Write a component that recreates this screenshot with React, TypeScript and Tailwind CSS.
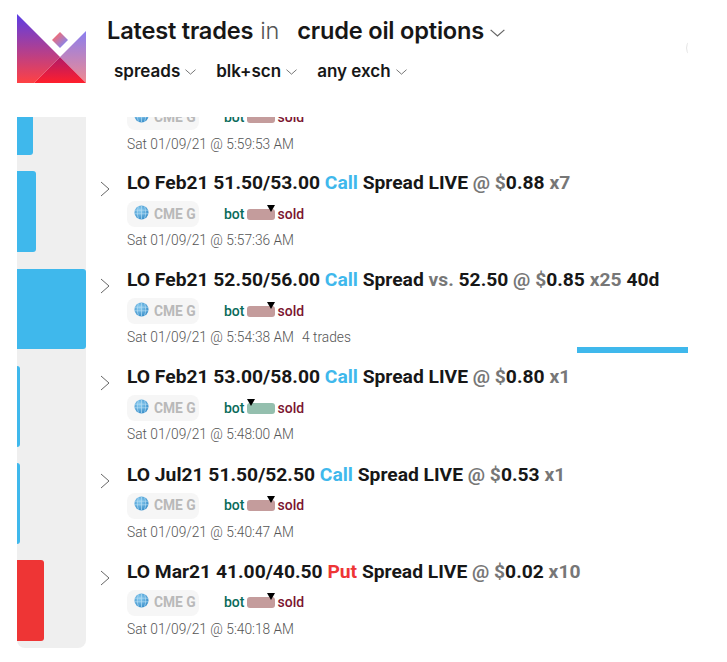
import React from "react";

const Chevron = ({ w = 12, h = 7, c = "#666" }: { w?: number; h?: number; c?: string }) => (
  <svg width={w} height={h} viewBox="0 0 12 7" fill="none" className="shrink-0" preserveAspectRatio="none">
    <path d="M0.5 0.8 L6 6 L11.5 0.8" stroke={c} strokeWidth="1" />
  </svg>
);

const Logo = () => (
  <svg width="69" height="69" viewBox="0 0 69 69" className="shrink-0">
    <defs>
      <linearGradient id="a" x1="0" y1="0" x2="0" y2="1">
        <stop offset="0" stopColor="#5a3de6" />
        <stop offset="1" stopColor="#ff4143" />
      </linearGradient>
      <linearGradient id="b" x1="0" y1="0" x2="0" y2="1">
        <stop offset="0" stopColor="#8a7ff0" />
        <stop offset="1" stopColor="#f08a90" />
      </linearGradient>
      <linearGradient id="c" x1="0" y1="0" x2="0" y2="1">
        <stop offset="0" stopColor="#b01a6a" />
        <stop offset="1" stopColor="#ff1f2c" />
      </linearGradient>
      <linearGradient id="d" x1="0" y1="0" x2="1" y2="1">
        <stop offset="0.15" stopColor="#fb6a6a" />
        <stop offset="0.85" stopColor="#7f86f5" />
      </linearGradient>
    </defs>
    <path d="M0 0 L43 43 L17 69 L0 69 Z" fill="url(#a)" />
    <path d="M69 17 V69 L43 43 Z" fill="url(#b)" />
    <path d="M43 43 L69 69 H17 Z" fill="url(#c)" />
    <path d="M43 18 L51 26 L43 34 L35 26 Z" fill="url(#d)" />
  </svg>
);

const Globe = () => (
  <svg width="15" height="15" viewBox="0 0 15 15" className="mb-[4px] shrink-0">
    <defs>
      <radialGradient id="g" cx="0.4" cy="0.35" r="0.75">
        <stop offset="0" stopColor="#8fd0f2" />
        <stop offset="1" stopColor="#2f86c4" />
      </radialGradient>
    </defs>
    <circle cx="7.5" cy="7.5" r="7" fill="url(#g)" />
    <path d="M1 5.2H14M0.6 8.8H14.4M7.5 .5V14.5M4.5 1.2C3 5 3 10 4.5 13.8M10.5 1.2C12 5 12 10 10.5 13.8" stroke="#b5dcf3" strokeWidth=".7" fill="none" />
  </svg>
);

const Chip = () => (
  <div className="flex h-[26px] w-[72px] items-center gap-[5px] rounded-lg bg-[#f6f6f6] pl-[7px] text-[13.8px] font-bold text-[#b9b9b9]">
    <Globe />
    <span>CME G</span>
  </div>
);

const Meter = ({ green, left = false }: { green?: boolean; left?: boolean }) => (
  <div className="ml-[25px] flex items-center text-[14px] font-medium">
    <span className="text-[#0a6b5a]">bot</span>
    <span className={`relative ml-[3px] mr-[2px] h-[11px] w-[28px] rounded-[3px] ${green ? "bg-[#94bfae]" : "bg-[#c49c9c]"}`}>
      <span className={`absolute top-[-4px] h-0 w-0 border-x-[4px] border-t-[7px] border-x-transparent border-t-black ${left ? "left-[0px]" : "right-[0px]"}`} />
    </span>
    <span className="text-[#7b1530]">sold</span>
  </div>
);

type Seg = [string, string?];
const G = "text-[#777777]";
const B = "text-[#3fb8ec]";
const R = "text-[#ee3535]";

const rows: { title: Seg[]; time: string; extra?: string; green?: boolean }[] = [
  {
    title: [["LO Feb21 51.50/53.00 "], ["Call", B], [" Spread LIVE "], ["@ $", G], ["0.88 "], ["x7", G]],
    time: "Sat 01/09/21 @ 5:57:36 AM",
  },
  {
    title: [["LO Feb21 52.50/56.00 "], ["Call", B], [" Spread "], ["vs. ", G], ["52.50 "], ["@ $", G], ["0.85 "], ["x25 ", G], ["40d"]],
    time: "Sat 01/09/21 @ 5:54:38 AM",
    extra: "4 trades",
  },
  {
    title: [["LO Feb21 53.00/58.00 "], ["Call", B], [" Spread LIVE "], ["@ $", G], ["0.80 "], ["x1", G]],
    time: "Sat 01/09/21 @ 5:48:00 AM",
    green: true,
  },
  {
    title: [["LO Jul21 51.50/52.50 "], ["Call", B], [" Spread LIVE "], ["@ $", G], ["0.53 "], ["x1", G]],
    time: "Sat 01/09/21 @ 5:40:47 AM",
  },
  {
    title: [["LO Mar21 41.00/40.50 "], ["Put", R], [" Spread LIVE "], ["@ $", G], ["0.02 "], ["x10", G]],
    time: "Sat 01/09/21 @ 5:40:18 AM",
  },
];

const bars: { w: string; h: string; color: string; mt: string }[] = [
  { w: "w-[19px]", h: "h-[81px]", color: "bg-[#3fb8ec]", mt: "mt-[16px]" },
  { w: "w-[69px]", h: "h-[80px]", color: "bg-[#3fb8ec]", mt: "mt-[17px]" },
  { w: "w-[3px]", h: "h-[81px]", color: "bg-[#3fb8ec]", mt: "mt-[17px]" },
  { w: "w-[3px]", h: "h-[81px]", color: "bg-[#3fb8ec]", mt: "mt-[16px]" },
  { w: "w-[27px]", h: "h-[81px]", color: "bg-[#ee3535]", mt: "mt-[16px]" },
];

export default function App() {
  return (
    <div className="relative h-[662px] w-[727px] overflow-hidden bg-white font-['Roboto',sans-serif] text-[#171717]">
      <header className="flex h-[117px] pl-[17px] pt-[14px]">
        <Logo />
        <div className="ml-[21px] font-['Inter',sans-serif]">
          <div className="flex h-[34px] items-center text-[23.6px] font-semibold tracking-[-0.2px]">
            <span>Latest trades</span>
            <span className="ml-[7px] font-light text-[#555]">in</span>
            <span className="ml-[18px]">crude oil options</span>
            <span className="ml-[6px] mt-[3px]"><Chevron w={15} h={8} /></span>
          </div>
          <div className="ml-[7px] mt-[12px] flex h-[24px] items-center text-[17px] font-semibold">
            <span>spreads</span>
            <span className="ml-[5px] mr-[20px]"><Chevron w={11} h={6} /></span>
            <span>blk+scn</span>
            <span className="ml-[5px] mr-[20px]"><Chevron w={11} h={6} /></span>
            <span>any exch</span>
            <span className="ml-[5px]"><Chevron w={11} h={6} /></span>
          </div>
        </div>
      </header>

      <main className="flex">
        <aside className="ml-[17px] h-[531px] w-[69px] shrink-0 rounded-b-lg bg-[#efefef]">
          <div className="h-[38px] w-[16px] rounded-br-[3px] bg-[#3fb8ec]" />
          {bars.map((b, i) => (
            <div key={i} className={`rounded-r-[3px] ${b.h} ${b.w} ${b.color} ${b.mt}`} />
          ))}
        </aside>

        <section className="ml-[11px] min-w-0 flex-1">
          <div className="relative ml-[30px] h-[43px] overflow-hidden">
            <div className="absolute left-0 top-[-13px] flex items-center">
              <Chip />
              <Meter />
            </div>
            <div className="absolute left-0 top-[17px] text-[13.75px] font-light text-[#555]">Sat 01/09/21 @ 5:59:53 AM</div>
          </div>
          {rows.map((r, i) => (
            <article key={i} className="flex h-[97.2px] pt-[12px]">
              <div className="flex h-[22px] w-[30px] shrink-0 items-center pt-[12px] pl-[3px]">
                <svg width="10" height="16" viewBox="0 0 10 16" fill="none">
                  <path d="M1 1 L9 8 L1 15" stroke="#666" strokeWidth="1" />
                </svg>
              </div>
              <div>
                <div className="h-[22px] whitespace-nowrap text-[19.25px] font-bold leading-[22px]">
                  {r.title.map((s, j) => (
                    <span key={j} className={s[1] ?? ""}>{s[0]}</span>
                  ))}
                </div>
                <div className="mt-[7px] flex items-center">
                  <Chip />
                  <Meter green={r.green} left={r.green} />
                </div>
                <div className="mt-[3px] text-[13.75px] font-light text-[#555]">
                  {r.time}
                  {r.extra && <span className="ml-[8px]">{r.extra}</span>}
                </div>
              </div>
            </article>
          ))}
        </section>
      </main>

      <div className="absolute left-[577px] top-[347px] h-[6px] w-[111px] bg-[#3fb8ec]" />
      <div className="absolute left-[686px] top-[38px] h-[20px] w-[20px] rounded-full border border-[#e5e5e5]" />
      <div className="absolute left-[688px] top-0 h-full w-[39px] bg-white" />
    </div>
  );
}
